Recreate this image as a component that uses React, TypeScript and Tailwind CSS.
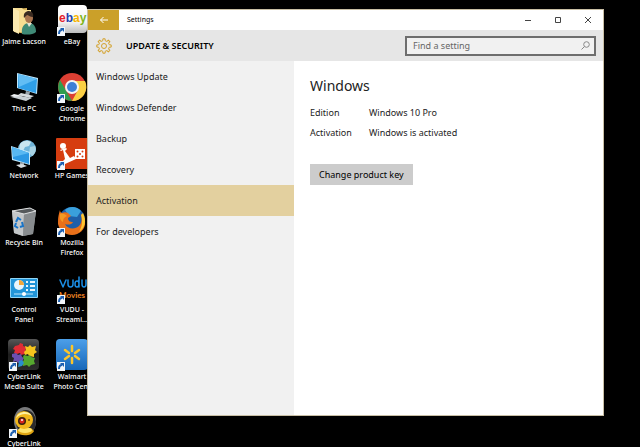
import { useState } from 'react'
import type { ReactNode } from 'react'

type Shortcut = {
  id: string
  lines: string[]
  icon: ReactNode
  linked?: boolean
}

const UserFolderIcon = (
  <>
    <path d="M6 5l13-1v26L6 28z" fill="#dcb65c" />
    <path d="M5 4h9l2 2h7v22H10l-5-2z" fill="#f7dd92" />
    <path d="M5 4l6 3v23l-6-3z" fill="#fbe9b0" />
    <path d="M14 30c-1-7 2-11 7-11s7 4 7 9c-3 3-10 3-14 2z" fill="#3f8a76" />
    <path d="M19 19l2 4 3-4z" fill="#e9e3d4" />
    <ellipse cx="21" cy="14" rx="4" ry="5" fill="#a9744f" />
    <path d="M16 14c-1-5 2-7 5-7s5 3 4 6c-3 0-5-2-6-2z" fill="#3a2a20" />
  </>
)

const ComputerIcon = (
  <>
    <path d="M9 2l21 5-1 16L9 17z" fill="#bfe6fb" />
    <path d="M10 3l19 5-1 14-18-5z" fill="#2f9fe8" />
    <path d="M10 3l19 5-18 8z" fill="#62bdf4" />
    <path d="M18 20l4 1-1 4-4-1z" fill="#9aa4ab" />
    <path d="M13 22l13 3-4 2-12-3z" fill="#d5dade" />
    <path d="M6 23l9 2-5 2-8-2z" fill="#eef1f3" />
    <path d="M3 26l9-1 12 2-6 3z" fill="#c9d0d5" />
  </>
)

const NetworkIcon = (
  <>
    <circle cx="19" cy="11" r="9" fill="#6fb4d8" />
    <path d="M12 6c3-4 8-4 11-2l-2 4-4 1-2 4-4-1z" fill="#c9e6f0" />
    <path d="M22 9l5-1c2 4 0 8-3 10l-3-3z" fill="#a8d3e4" />
    <path d="M3 8l19 6v13L4 22z" fill="#c2e8fb" />
    <path d="M4 9l17 6v11L5 21z" fill="#2b98e4" />
    <path d="M4 9l17 6-16 4z" fill="#58b8f2" />
    <path d="M12 24l4 1v3h-4z" fill="#9aa4ab" />
    <path d="M8 27l6-1 5 2-6 2z" fill="#d6dce0" />
  </>
)

const RecycleIcon = (
  <>
    <path d="M4 6l18-3 6 3-3 23-10 2-9-3z" fill="#9b9fa2" />
    <path d="M4 6l12 3-1 22-9-3z" fill="#c3c6c8" />
    <path d="M16 9l12-3-3 23-10 2z" fill="#888c8f" />
    <path d="M4 6l18-3 6 3-12 3z" fill="#55595c" stroke="#dfe1e2" />
    <path d="M8 17l2-4 3 2M14 17l1 4-3 1M10 23l-3-2 1-3" fill="none" stroke="#1874c9" strokeWidth="2" />
  </>
)

const ControlPanelIcon = (
  <>
    <rect x="2" y="6" width="28" height="20" rx="1" fill="#8fd4f5" />
    <rect x="3" y="7" width="26" height="18" fill="#2295d8" />
    <circle cx="11" cy="13" r="5" fill="#e8f6fd" />
    <path d="M11 13V8a5 5 0 0 1 5 5z" fill="#f3a73b" />
    <path d="M18 10h2m2 0h5M18 14h2m2 0h5M18 18h2m2 0h5" stroke="#e8f6fd" strokeWidth="2" />
    <path d="M6 22h19" stroke="#bfe6fa" />
    <circle cx="16" cy="22" r="2" fill="#fff" />
  </>
)

const MediaSuiteIcon = (
  <>
    <defs>
      <linearGradient id="suite" x1="0" y1="0" x2="0" y2="1">
        <stop offset="0" stopColor="#575757" />
        <stop offset=".5" stopColor="#1d1d1d" />
        <stop offset="1" stopColor="#2d2d2d" />
      </linearGradient>
    </defs>
    <rect width="31" height="31" rx="4" fill="url(#suite)" />
    <path d="M7 7l4-1 1-2 3 1v2l3 1-1 7-4 1-1-2-3 1-3-1 1-3-2-1z" fill="#e02c35" />
    <path d="M17 7l3 1 2-2 2 2 4-1-1 4 2 2-3 2v3l-5-1-1-2-3 1-1-3 2-2z" fill="#f6c41e" />
    <path d="M4 15l4-1 2 2 3-1 1 3 2 1-2 4-4 1-2-2-3 1 1-4-2-1z" fill="#6b4fb0" />
    <path d="M16 16l4 1 2-1 1 2 4 1-1 3 1 3-4 1-2 2-2-2-4 1-1-4 2-2-1-3z" fill="#56a82f" />
    <path d="M11 22l3-1 2 3-2 3-4 1z" fill="#2b8fd0" />
  </>
)

const WebcamIcon = (
  <>
    <ellipse cx="17" cy="15" rx="11" ry="14" fill="#77787a" />
    <ellipse cx="18" cy="16" rx="10" ry="12" fill="#2b2b2c" />
    <path d="M9 24l14-2 3 3c-2 5-13 6-18 1z" fill="#e0a513" />
    <ellipse cx="17" cy="24" rx="7" ry="3" fill="#ffe46b" />
    <circle cx="16" cy="14" r="9" fill="#f2b71b" />
    <path d="M8 12a9 9 0 0 1 16-2c-5-3-11-3-16 2z" fill="#fff1a0" />
    <circle cx="14" cy="15" r="4" fill="#3a2210" />
    <circle cx="14" cy="15" r="2.5" fill="#d8261c" />
    <circle cx="14" cy="14" r="1" fill="#fff" />
    <circle cx="21" cy="14" r="1" fill="#6b4a10" />
  </>
)

const EbayIcon = (
  <>
    <defs>
      <linearGradient id="ebay" x1="0" y1="0" x2="0" y2="1">
        <stop offset="0" stopColor="#fff" />
        <stop offset=".6" stopColor="#f4f4f4" />
        <stop offset="1" stopColor="#bcbcbc" />
      </linearGradient>
    </defs>
    <rect x="2" y="1" width="29" height="28" rx="4" fill="url(#ebay)" />
    <text x="3" y="18" fontFamily="Liberation Sans" fontWeight="700" fontSize="12">
      <tspan fill="#e5202b">e</tspan>
      <tspan fill="#1f3fae">b</tspan>
      <tspan fill="#f5b400">a</tspan>
      <tspan fill="#7fb51c">y</tspan>
    </text>
  </>
)

const ChromeIcon = (
  <>
    <circle cx="16" cy="16" r="14" fill="#dc3f33" />
    <path d="M4 9l8 14 4 7A14 14 0 0 1 4 9z" fill="#2f9e4f" />
    <path d="M16 10h13a14 14 0 0 1-13 20l6-11z" fill="#fbd043" />
    <circle cx="16" cy="16" r="7" fill="#f4f4f4" />
    <circle cx="16" cy="16" r="5" fill="#3d7fd6" />
  </>
)

const GamesIcon = (
  <>
    <rect width="32" height="31" rx="1" fill="#d63d10" />
    <circle cx="7" cy="8" r="3" fill="#fff" />
    <path d="M4 12l6-2 1 1-2 2 5 7 4-2 2 3-11 5-2-3 2-2-2-9-2 1z" fill="#fff" />
    <rect x="19" y="11" width="10" height="10" fill="#fff" />
    <g fill="#d63d10">
      <circle cx="21.5" cy="13.5" r="1" />
      <circle cx="26.5" cy="13.5" r="1" />
      <circle cx="24" cy="16" r="1" />
      <circle cx="21.5" cy="18.5" r="1" />
      <circle cx="26.5" cy="18.5" r="1" />
    </g>
  </>
)

const FirefoxIcon = (
  <>
    <circle cx="16" cy="15" r="13" fill="#1f5fa9" />
    <path d="M9 5c4-4 12-4 16 1l-4 6-8-1z" fill="#3aa0dc" />
    <path d="M4 5c0 2 1 3 2 3 2-1 4-1 6 0l3 3-3 2c0 3 2 4 5 4-1 3-6 3-8 2 2 5 10 6 14 2 3-3 3-8 2-12 3 3 4 4 4 8 1 7-6 13-13 13S1 24 2 16c0-4 1-8 2-11z" fill="#e8701a" />
    <path d="M27 8c4 8 2 15-4 19 3-5 4-11 2-17z" fill="#fbc52f" />
    <path d="M4 9c2-1 5 0 7 2-3 1-4 3-4 6-2-1-4-4-3-8z" fill="#f59a23" />
  </>
)

const VuduIcon = (
  <>
    <path
      d="M4 8l3 7 3-7M12 8v4c0 4 5 4 5 0V8M23 5v10M23 12c0 4-4 4-4 0s4-4 4 0M26 8v4c0 4 4 4 4 0V8"
      fill="none"
      stroke="#1b8fe6"
      strokeWidth="1.5"
      strokeLinecap="round"
      strokeLinejoin="round"
    />
    <text x="3" y="26" fontFamily="Lato" fontWeight="700" fontSize="8" fill="#ee8322">
      Movies
    </text>
  </>
)

const WalmartIcon = (
  <>
    <defs>
      <linearGradient id="walmart" x1="0" y1="0" x2="0" y2="1">
        <stop offset="0" stopColor="#4c9fe9" />
        <stop offset="1" stopColor="#1767b8" />
      </linearGradient>
    </defs>
    <rect width="32" height="31" rx="4" fill="url(#walmart)" />
    <path
      d="M16 7v5M16 19v5M9 11l4 3M19 17l4 3M23 11l-4 3M13 17l-4 3"
      stroke="#fbc52a"
      strokeWidth="2.5"
      strokeLinecap="round"
    />
  </>
)

const shortcuts: Shortcut[] = [
  { id: 'user', lines: ['Jaime Lacson'], icon: UserFolderIcon },
  { id: 'pc', lines: ['This PC'], icon: ComputerIcon },
  { id: 'network', lines: ['Network'], icon: NetworkIcon },
  { id: 'recycle', lines: ['Recycle Bin'], icon: RecycleIcon },
  { id: 'control', lines: ['Control', 'Panel'], icon: ControlPanelIcon },
  { id: 'suite', lines: ['CyberLink', 'Media Suite'], icon: MediaSuiteIcon, linked: true },
  { id: 'youcam', lines: ['CyberLink'], icon: WebcamIcon, linked: true },
  { id: 'ebay', lines: ['eBay'], icon: EbayIcon, linked: true },
  { id: 'chrome', lines: ['Google', 'Chrome'], icon: ChromeIcon, linked: true },
  { id: 'games', lines: ['HP Games'], icon: GamesIcon, linked: true },
  { id: 'firefox', lines: ['Mozilla', 'Firefox'], icon: FirefoxIcon, linked: true },
  { id: 'vudu', lines: ['VUDU -', 'Streami...'], icon: VuduIcon, linked: true },
  { id: 'walmart', lines: ['Walmart', 'Photo Cent'], icon: WalmartIcon, linked: true },
]

const sections = [
  'Windows Update',
  'Windows Defender',
  'Backup',
  'Recovery',
  'Activation',
  'For developers',
]

function DesktopIcon({ shortcut }: { shortcut: Shortcut }) {
  return (
    <button type="button" className="flex h-[67px] w-12 flex-col items-center">
      <svg viewBox="0 0 32 32" className="size-8 shrink-0">
        {shortcut.icon}
        {shortcut.linked && (
          <>
            <rect x="1" y="23" width="8" height="9" fill="#f2f6fa" />
            <path d="M3 30c0-3 1-4 3-4" fill="none" stroke="#1d5fb0" strokeWidth="2" />
            <path d="M4 24h4v4z" fill="#1d5fb0" />
          </>
        )}
      </svg>
      <span className="mt-px text-[7px] leading-[10px] font-medium whitespace-nowrap text-white">
        {shortcut.lines.map((line) => (
          <span key={line} className="block">
            {line}
          </span>
        ))}
      </span>
    </button>
  )
}

const teeth = [0, 45, 90, 135, 180, 225, 270, 315]

function GearIcon() {
  return (
    <svg viewBox="0 0 16 16" className="size-4" fill="none" stroke="#d3a22e" strokeLinejoin="round">
      {teeth.map((angle) => (
        <path key={angle} d="M6 3.2l.8-.6.1-1.8h2.2l.1 1.8.8.6" transform={`rotate(${angle} 8 8)`} />
      ))}
      <circle cx="8" cy="8" r="2.5" />
    </svg>
  )
}

function TitleBar() {
  return (
    <div className="flex h-5 items-center bg-white">
      <button type="button" aria-label="Back" className="grid h-5 w-[31px] place-items-center bg-[#cba029]">
        <svg viewBox="0 0 10 8" className="h-2 w-2.5" fill="none" stroke="#fff">
          <path d="M9 4H1.5M4.5 1l-3 3 3 3" />
        </svg>
      </button>
      <span className="ml-2 text-[7px] text-black">Settings</span>
      <div className="ml-auto flex text-[#444]">
        <button type="button" aria-label="Minimize" className="grid h-5 w-[30px] place-items-center">
          <svg viewBox="0 0 8 8" className="size-2" stroke="currentColor">
            <path d="M1 4.5h6" />
          </svg>
        </button>
        <button type="button" aria-label="Maximize" className="grid h-5 w-[30px] place-items-center">
          <svg viewBox="0 0 8 8" className="size-2" fill="none" stroke="currentColor">
            <path d="M1.5 1.5h5v5h-5z" />
          </svg>
        </button>
        <button type="button" aria-label="Close" className="grid h-5 w-[30px] place-items-center">
          <svg viewBox="0 0 8 8" className="size-2" stroke="currentColor">
            <path d="M1 1l6 6M7 1L1 7" />
          </svg>
        </button>
      </div>
    </div>
  )
}

export default function App() {
  const [active, setActive] = useState('Activation')

  return (
    <div className="relative h-screen overflow-hidden bg-black font-['Noto_Sans','Open_Sans',sans-serif]">
      <div className="grid w-24 grid-flow-col grid-rows-7 pt-1">
        {shortcuts.map((shortcut) => (
          <DesktopIcon key={shortcut.id} shortcut={shortcut} />
        ))}
      </div>

      <main className="absolute top-[9px] right-9 bottom-[31px] left-[87px] flex flex-col border border-[#c9bfa5] bg-white">
        <TitleBar />

        <header className="flex h-[31px] items-center bg-[#e6e6e6] pr-[7px] pl-2">
          <GearIcon />
          <h1 className="ml-[14px] text-[9px] font-semibold text-black">UPDATE &amp; SECURITY</h1>
          <label className="ml-auto flex h-5 w-[191px] items-center border-2 border-[#6e6e6e] bg-[#f1f1f1] px-1">
            <input
              type="text"
              aria-label="Find a setting"
              placeholder="Find a setting"
              className="min-w-0 flex-1 bg-transparent pl-0.5 text-[9px] outline-none placeholder:text-[#666]"
            />
            <svg viewBox="0 0 9 9" className="size-[9px]" fill="none" stroke="#888">
              <circle cx="5.5" cy="3.5" r="2.8" />
              <path d="M3.5 5.5L.5 8.5" />
            </svg>
          </label>
        </header>

        <div className="flex flex-1">
          <nav className="w-[206px] shrink-0 bg-[#f1f1f1]">
            {sections.map((section) => (
              <button
                key={section}
                type="button"
                onClick={() => setActive(section)}
                className={`flex h-[31px] w-full items-center px-2 text-[9px] text-[#222] ${
                  active === section ? 'bg-[#e3d09f]' : ''
                }`}
              >
                {section}
              </button>
            ))}
          </nav>

          <section className="flex-1 px-4 pt-[14px] text-[9px] text-[#222]">
            <h2 className="text-[14px] leading-[22px]">Windows</h2>
            <dl className="mt-1.5 grid grid-cols-[59px_1fr] leading-5">
              <dt>Edition</dt>
              <dd>Windows 10 Pro</dd>
              <dt>Activation</dt>
              <dd>Windows is activated</dd>
            </dl>
            <button type="button" className="mt-[21px] h-[21px] bg-[#cccccc] px-[9px] text-black">
              Change product key
            </button>
          </section>
        </div>
      </main>
    </div>
  )
}
